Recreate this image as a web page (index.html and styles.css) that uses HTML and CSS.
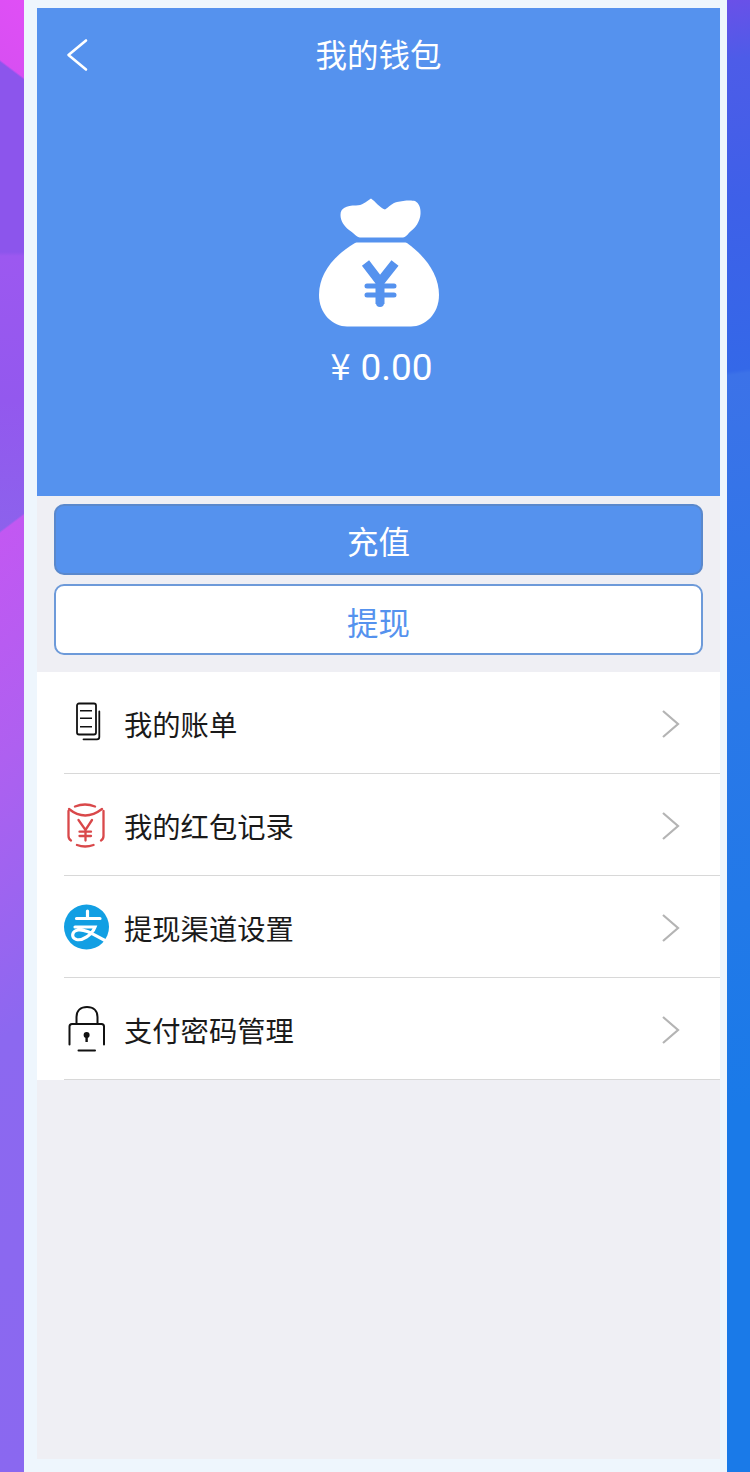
FILE: index.html
```html
<!DOCTYPE html>
<html lang="zh-CN">
<head>
  <meta charset="UTF-8">
  <meta name="viewport" content="width=device-width, initial-scale=1.0">
  <title>我的钱包</title>
  <link rel="stylesheet" href="styles.css">
</head>
<body>
  <div class="strip strip-left"></div>

  <div class="frame">
    <main class="wallet">
      <header class="hero">
        <div class="nav">
          <svg class="back" width="24" height="34" viewBox="0 0 24 34">
            <path d="M21 2.5 L3.5 17 L21 31.5" fill="none" stroke="#fff" stroke-width="2.6" stroke-linecap="round" stroke-linejoin="round"/>
          </svg>
          <h1 class="title">我的钱包</h1>
        </div>

        <svg class="bag" width="120" height="130" viewBox="0 0 120 130">
          <path fill="#fff" d="M21.5 17 C21.5 10 27 7.5 37 7.5 C43 7.5 47 4 52 .5 C56 3 61 10 66 11.5 C70 9 73 5 78 4 C84 2.5 92 2 96 3 C100 5 102 10 101.5 16 C101 24 96 30 92 33 C89 35.5 87 39.5 84 39.5 H41 C38 39.5 35 35 30 32 C25 28 21.5 23 21.5 17 Z"/>
          <path fill="#fff" d="M36 45 C37 44.5 38 44.5 39 44.5 H85 C86 44.5 87 44.5 88 45 C106 58 120 76 120 97 C120 116 106 128.5 92 128.5 H28 C14 128.5 0 116 0 97 C0 76 14 58 36 45 Z"/>
          <path fill="none" stroke="#5592ee" stroke-width="9" d="M46.5 65 L61 84 L76 65 M61 84 V106"/>
          <path fill="none" stroke="#5592ee" stroke-width="5" stroke-linecap="round" d="M48 88 H75 M48 97 H75"/>
          <path fill="none" stroke="#5592ee" stroke-width="8" stroke-linecap="round" d="M61 88 V105"/>
        </svg>

        <p class="balance"><span class="yen">¥</span>0.00</p>
      </header>

      <section class="actions">
        <button class="btn btn-primary" type="button">充值</button>
        <button class="btn btn-outline" type="button">提现</button>
      </section>

      <ul class="menu">
        <li class="menu-row">
          <svg class="menu-icon" width="46" height="46" viewBox="0 0 46 46">
            <rect x="13" y="3.5" width="19" height="31" rx="2" fill="none" stroke="#111" stroke-width="1.8"/>
            <path fill="none" stroke="#111" stroke-width="1.6" d="M16 10.7 H28 M16 18.3 H28 M16 26.7 H28"/>
            <path fill="none" stroke="#111" stroke-width="1.8" stroke-linecap="round" d="M35.3 11.5 V37 Q35.3 39.3 33 39.3 H19.5"/>
          </svg>
          <span class="menu-label">我的账单</span>
          <svg class="chevron" width="20" height="30" viewBox="0 0 20 30">
            <path d="M2 2 L17 15 L2 28" fill="none" stroke="#b4b4b4" stroke-width="2.2"/>
          </svg>
        </li>
        <li class="menu-row">
          <svg class="menu-icon" width="46" height="46" viewBox="0 0 46 46">
            <g fill="none" stroke="#d9484a" stroke-width="2.3" stroke-linecap="round">
              <path d="M11 4.5 Q21 .5 31 4.5"/>
              <path d="M5 7 Q21 20 38 7"/>
              <path d="M4.5 9 V34 Q4.5 37 7 38.5 M39.5 9 V34 Q39.5 37 37 38.5"/>
              <path d="M13 43 Q21 46 29.5 43"/>
              <path d="M14.5 18 L21.5 28 L28 18 M21.5 28 V38.5 M15.5 29.7 H27 M15.5 34 H27"/>
            </g>
          </svg>
          <span class="menu-label">我的红包记录</span>
          <svg class="chevron" width="20" height="30" viewBox="0 0 20 30">
            <path d="M2 2 L17 15 L2 28" fill="none" stroke="#b4b4b4" stroke-width="2.2"/>
          </svg>
        </li>
        <li class="menu-row">
          <svg class="menu-icon" width="46" height="46" viewBox="0 0 46 46">
            <circle cx="22.5" cy="23" r="22.5" fill="#129fe3"/>
            <g fill="none" stroke="#fff" stroke-width="3.2" stroke-linecap="round">
              <path d="M12.5 14.5 H36 M23.5 7 V14.5"/>
              <path d="M11 23 H31 C28 31 18 37 12.5 35.5 C6.5 33.5 8 27 14 26 C22 25 30 31 41 36.5"/>
            </g>
          </svg>
          <span class="menu-label">提现渠道设置</span>
          <svg class="chevron" width="20" height="30" viewBox="0 0 20 30">
            <path d="M2 2 L17 15 L2 28" fill="none" stroke="#b4b4b4" stroke-width="2.2"/>
          </svg>
        </li>
        <li class="menu-row">
          <svg class="menu-icon" width="46" height="46" viewBox="0 0 46 46">
            <g fill="none" stroke="#111" stroke-width="2" stroke-linecap="round">
              <path d="M12.5 18 V11 C12.5 4.5 17 1 23 1 C29 1 33.5 4.5 33.5 11 V18"/>
              <path d="M5.5 38.5 V20.5 Q5.5 18 8 18 H37.5 Q40 18 40 20.5 V38.5"/>
              <path d="M14.5 44.5 H31"/>
            </g>
            <circle cx="22.6" cy="29" r="3" fill="#111"/>
            <path d="M21.4 29 H23.8 V36 H21.4 Z" fill="#111"/>
          </svg>
          <span class="menu-label">支付密码管理</span>
          <svg class="chevron" width="20" height="30" viewBox="0 0 20 30">
            <path d="M2 2 L17 15 L2 28" fill="none" stroke="#b4b4b4" stroke-width="2.2"/>
          </svg>
        </li>
      </ul>
    </main>
  </div>

  <div class="strip strip-right"></div>
</body>
</html>
```

FILE: styles.css
```css
* {
  box-sizing: border-box;
}

html, body {
  height: 100%;
}

body {
  margin: 0;
  display: flex;
  height: 1472px;
  overflow: hidden;
  font-family: "Noto Sans CJK SC", "Noto Sans", sans-serif;
}

.strip-left {
  width: 24px;
  background:
    linear-gradient(217deg, #e04ff6 0, #d84ff2 62px, transparent 64px),
    linear-gradient(143deg, transparent 0, transparent 424px, #c258f2 426px, #ae60f0 607px, #8c68f0 831px, #8a68f0 100%),
    linear-gradient(180deg, #8c55ec 0, #8c55ec 252px, #9c58f0 256px, #9358ee 400px, #8c62ec 535px);
}

.strip-right {
  width: 23px;
  background:
    linear-gradient(172deg, #6a50e8 0, #4d5ce8 60px, #3e60e8 200px, #3468e8 368px, #3c72e8 372px, #2a78e8 700px, #1a7ae8 1100px, #1a7ae8 100%);
}

.frame {
  width: 703px;
  height: 1472px;
  padding: 8px 7px 13px 13px;
  background: #eef6fd;
}

.wallet {
  height: 100%;
  background: #efeff4;
}

.hero {
  height: 488px;
  display: flex;
  flex-direction: column;
  align-items: center;
  background: #5592ee;
  color: #fff;
}

.nav {
  width: 100%;
  height: 94px;
  display: grid;
  grid-template-columns: 1fr auto 1fr;
  align-items: center;
  padding: 0 28px;
}

.back {
  display: block;
}

.title {
  margin: 0 0 4px;
  font-size: 31.5px;
  font-weight: 400;
  line-height: 90px;
}

.bag {
  margin-top: 96px;
  display: block;
}

.balance {
  margin: 11px 0 0 6px;
  font-family: Roboto, "Noto Sans CJK SC", sans-serif;
  font-size: 37px;
  font-weight: 400;
  line-height: 50px;
}

.yen {
  font-family: "Noto Sans CJK SC", sans-serif;
  font-size: 36px;
  margin-right: 10px;
}

.actions {
  height: 176px;
  display: flex;
  flex-direction: column;
  gap: 9px;
  padding: 8px 17px 0;
}

.btn {
  height: 71px;
  padding: 0;
  border-radius: 10px;
  font-family: inherit;
  font-size: 31.5px;
}

.btn-primary {
  border: 2px solid #5a88cc;
  background: #5592ee;
  color: #fff;
}

.btn-outline {
  padding-top: 2px;
  border: 2px solid #6d9ad9;
  background: #fff;
  color: #5592ee;
}

.menu {
  margin: 0;
  padding: 0 0 0 27px;
  list-style: none;
  background: #fff;
}

.menu-row {
  height: 102px;
  display: flex;
  align-items: center;
  padding-right: 39px;
  border-bottom: 1px solid #d8d8d8;
}

.menu-icon {
  flex: none;
  display: block;
  margin-right: 14px;
}

.menu-label {
  flex: 1;
  padding-top: 2px;
  font-size: 28.3px;
  color: #1a1a1a;
}

.chevron {
  flex: none;
  display: block;
  margin-top: 2px;
}
```
